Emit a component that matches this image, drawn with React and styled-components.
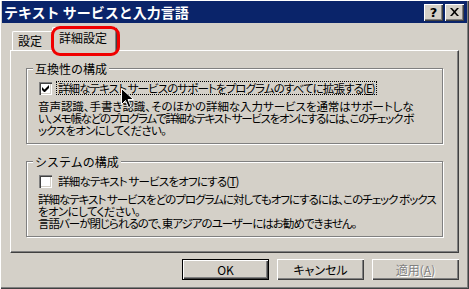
import styled, { createGlobalStyle } from "styled-components"

const Global = createGlobalStyle`
    html, body {
        margin: 0;
        padding: 0;
        background: #d4d0c8;
    }
    body {
        font-family: "Noto Sans CJK JP", "Noto Sans", sans-serif;
        font-size: 12px;
        color: #000;
    }
`

export default function App()
{
    return (
    <>
    <Global />
    <Window>
        <TitleBar>
            <Title>テキスト サービスと入力言語</Title>
            <TitleButtons>
                <TitleBtn>?</TitleBtn>
                <TitleBtn>
                    <svg width="9" height="8" viewBox="0 0 9 8">
                        <path d="M0 0h2l2.5 2.7L7 0h2L5.5 4 9 8H7L4.5 5.3 2 8H0l3.5-4z" fill="#000" />
                    </svg>
                </TitleBtn>
            </TitleButtons>
        </TitleBar>
        <Body>
            <TabStrip>
                <Tab>設定</Tab>
                <Tab $active>
                    詳細設定
                    <Highlight />
                </Tab>
            </TabStrip>
            <Panel>
                <Group>
                    <Legend>互換性の構成</Legend>
                    <CheckRow>
                        <CheckBox>
                            <svg width="7" height="7" viewBox="0 0 7 7">
                                <path d="M0 2v3l2 2h1l4-4V0L2.5 4.5z" fill="#000" />
                            </svg>
                        </CheckBox>
                        <Label $focus $ls={-0.9}>
                            詳細なテキスト サービスのサポートをプログラムのすべてに拡張する(<u>E</u>)
                        </Label>
                    </CheckRow>
                    <Desc>
                        <Line $ls={-0.05}>音声認識、手書き認識、そのほかの詳細な入力サービスを通常はサポートしな</Line>
                        <Line $ls={-1.3}>い、メモ帳などのプログラムで詳細なテキスト サービスをオンにするには、このチェック ボ</Line>
                        <Line $ls={-0.7}>ックスをオンにしてください。</Line>
                    </Desc>
                </Group>
                <Group>
                    <Legend>システムの構成</Legend>
                    <CheckRow>
                        <CheckBox />
                        <Label $ls={-0.8}>
                            詳細なテキスト サービスをオフにする(<u>T</u>)
                        </Label>
                    </CheckRow>
                    <Desc>
                        <Line $ls={-1.0}>詳細なテキスト サービスをどのプログラムに対してもオフにするには、このチェック ボックス</Line>
                        <Line $ls={-0.6}>をオンにしてください。</Line>
                        <Line $ls={-1.0}>言語バーが閉じられるので、東アジアのユーザーにはお勧めできません。</Line>
                    </Desc>
                </Group>
            </Panel>
            <ButtonRow>
                <Button $default>OK</Button>
                <Button>キャンセル</Button>
                <Button $disabled>適用(<u>A</u>)</Button>
            </ButtonRow>
        </Body>
        <Cursor>
            <svg width="13" height="21" viewBox="0 0 13 21">
                <path d="M0.5 0.5v16l4-4 3 7 2.5-1-3-7h5.5z" fill="#000" stroke="#fff" strokeWidth="1" />
            </svg>
        </Cursor>
    </Window>
    </>)
}

const Window = styled.div`
    position: relative;
    width: 469px;
    height: 289px;
    box-sizing: border-box;
    padding: 1px 2px 2px 2px;
    display: flex;
    flex-direction: column;
    background: #d4d0c8;
    box-shadow: inset 1px 1px 0 #fff, inset -1px -1px 0 #404040, inset -2px -2px 0 #808080;
`

const TitleBar = styled.div`
    height: 22px;
    flex-shrink: 0;
    background: #0a246a;
    display: flex;
    align-items: center;
    justify-content: space-between;
    padding: 0 3px 0 2px;
`

const Title = styled.div`
    color: #fff;
    font-weight: bold;
    font-size: 14px;
    line-height: 16px;
    white-space: nowrap;
`

const TitleButtons = styled.div`
    display: flex;
    gap: 2px;
`

const TitleBtn = styled.div`
    width: 19px;
    height: 17px;
    box-sizing: border-box;
    background: #d4d0c8;
    display: flex;
    align-items: center;
    justify-content: center;
    font-family: "DejaVu Sans", sans-serif;
    font-weight: bold;
    font-size: 13px;
    box-shadow: inset 1px 1px 0 #fff, inset -1px -1px 0 #404040, inset -2px -2px 0 #808080;
`

const Body = styled.div`
    flex: 1;
    display: flex;
    flex-direction: column;
    padding: 4px 8px 0 8px;
`

const TabStrip = styled.div`
    display: flex;
    align-items: flex-end;
    flex-shrink: 0;
    height: 23px;
    padding-left: 2px;
    position: relative;
    z-index: 1;
`

const Tab = styled.div`
    position: relative;
    box-sizing: border-box;
    height: ${p => p.$active ? "24px" : "19px"};
    margin-bottom: ${p => p.$active ? "-1px" : "0"};
    margin-left: ${p => p.$active ? "-2px" : "0"};
    padding: ${p => p.$active ? "3px 8px 0 6px" : "2px 9px 0 5px"};
    width: ${p => p.$active ? "65px" : "42px"};
    background: #d4d0c8;
    border-top: 1px solid #fff;
    border-left: 1px solid #fff;
    border-right: 1px solid #404040;
    border-radius: 2px 2px 0 0;
    box-shadow: inset -1px 0 0 #808080;
    font-size: 12px;
    line-height: 14px;
    white-space: nowrap;
`

const Highlight = styled.div`
    position: absolute;
    left: -2px;
    top: -2px;
    width: 69px;
    height: 30px;
    box-sizing: border-box;
    border: 3px solid #f00000;
    border-radius: 9px;
`

const Panel = styled.div`
    height: 203px;
    flex-shrink: 0;
    box-sizing: border-box;
    border-top: 1px solid #fff;
    border-left: 1px solid #fff;
    border-right: 1px solid #404040;
    border-bottom: 1px solid #404040;
    box-shadow: inset -1px -1px 0 #808080;
    padding: 11px 15px 0 15px;
    display: flex;
    flex-direction: column;
    gap: 11px;
`

const Group = styled.fieldset`
    margin: 0;
    padding: 0 12px 7px 12px;
    border: 1px solid #808080;
    box-shadow: 1px 1px 0 #fff, inset 1px 1px 0 #fff;
    min-width: 0;
`

const Legend = styled.legend`
    margin-left: -6px;
    padding: 0 2px;
    font-size: 12px;
    line-height: 13px;
    background: #d4d0c8;
`

const CheckRow = styled.div`
    display: flex;
    align-items: center;
    gap: 4px;
    margin-top: 6px;
    height: 14px;
`

const CheckBox = styled.div`
    width: 13px;
    height: 13px;
    box-sizing: border-box;
    background: #fff;
    display: flex;
    align-items: center;
    justify-content: center;
    flex-shrink: 0;
    box-shadow: inset 1px 1px 0 #808080, inset 2px 2px 0 #404040, inset -1px -1px 0 #fff, inset -2px -2px 0 #d4d0c8;
`

const Label = styled.div`
    padding: 0 1px;
    font-size: 11.5px;
    letter-spacing: ${p => p.$ls}px;
    line-height: 12px;
    border: 1px dotted ${p => p.$focus ? "#000" : "transparent"};
    white-space: nowrap;
    font-feature-settings: "palt";
`

const Desc = styled.div`
    margin-top: 5px;
    margin-left: -1px;
    font-size: 11.5px;
    font-feature-settings: "palt";
`

const Line = styled.div`
    line-height: 12px;
    letter-spacing: ${p => p.$ls}px;
    white-space: nowrap;
`

const ButtonRow = styled.div`
    display: flex;
    justify-content: flex-end;
    gap: 8px;
    margin-top: 6px;
`

const Button = styled.div`
    width: 87px;
    height: 21px;
    box-sizing: border-box;
    display: flex;
    align-items: center;
    justify-content: center;
    font-size: 12px;
    font-feature-settings: "palt";
    color: ${p => p.$disabled ? "#808080" : "#000"};
    text-shadow: ${p => p.$disabled ? "1px 1px 0 #fff" : "none"};
    border: ${p => p.$default ? "1px solid #000" : "none"};
    box-shadow: inset 1px 1px 0 #fff, inset -1px -1px 0 #404040, inset -2px -2px 0 #808080;
`

const Cursor = styled.div`
    position: absolute;
    left: 121px;
    top: 88px;
    display: flex;
`
